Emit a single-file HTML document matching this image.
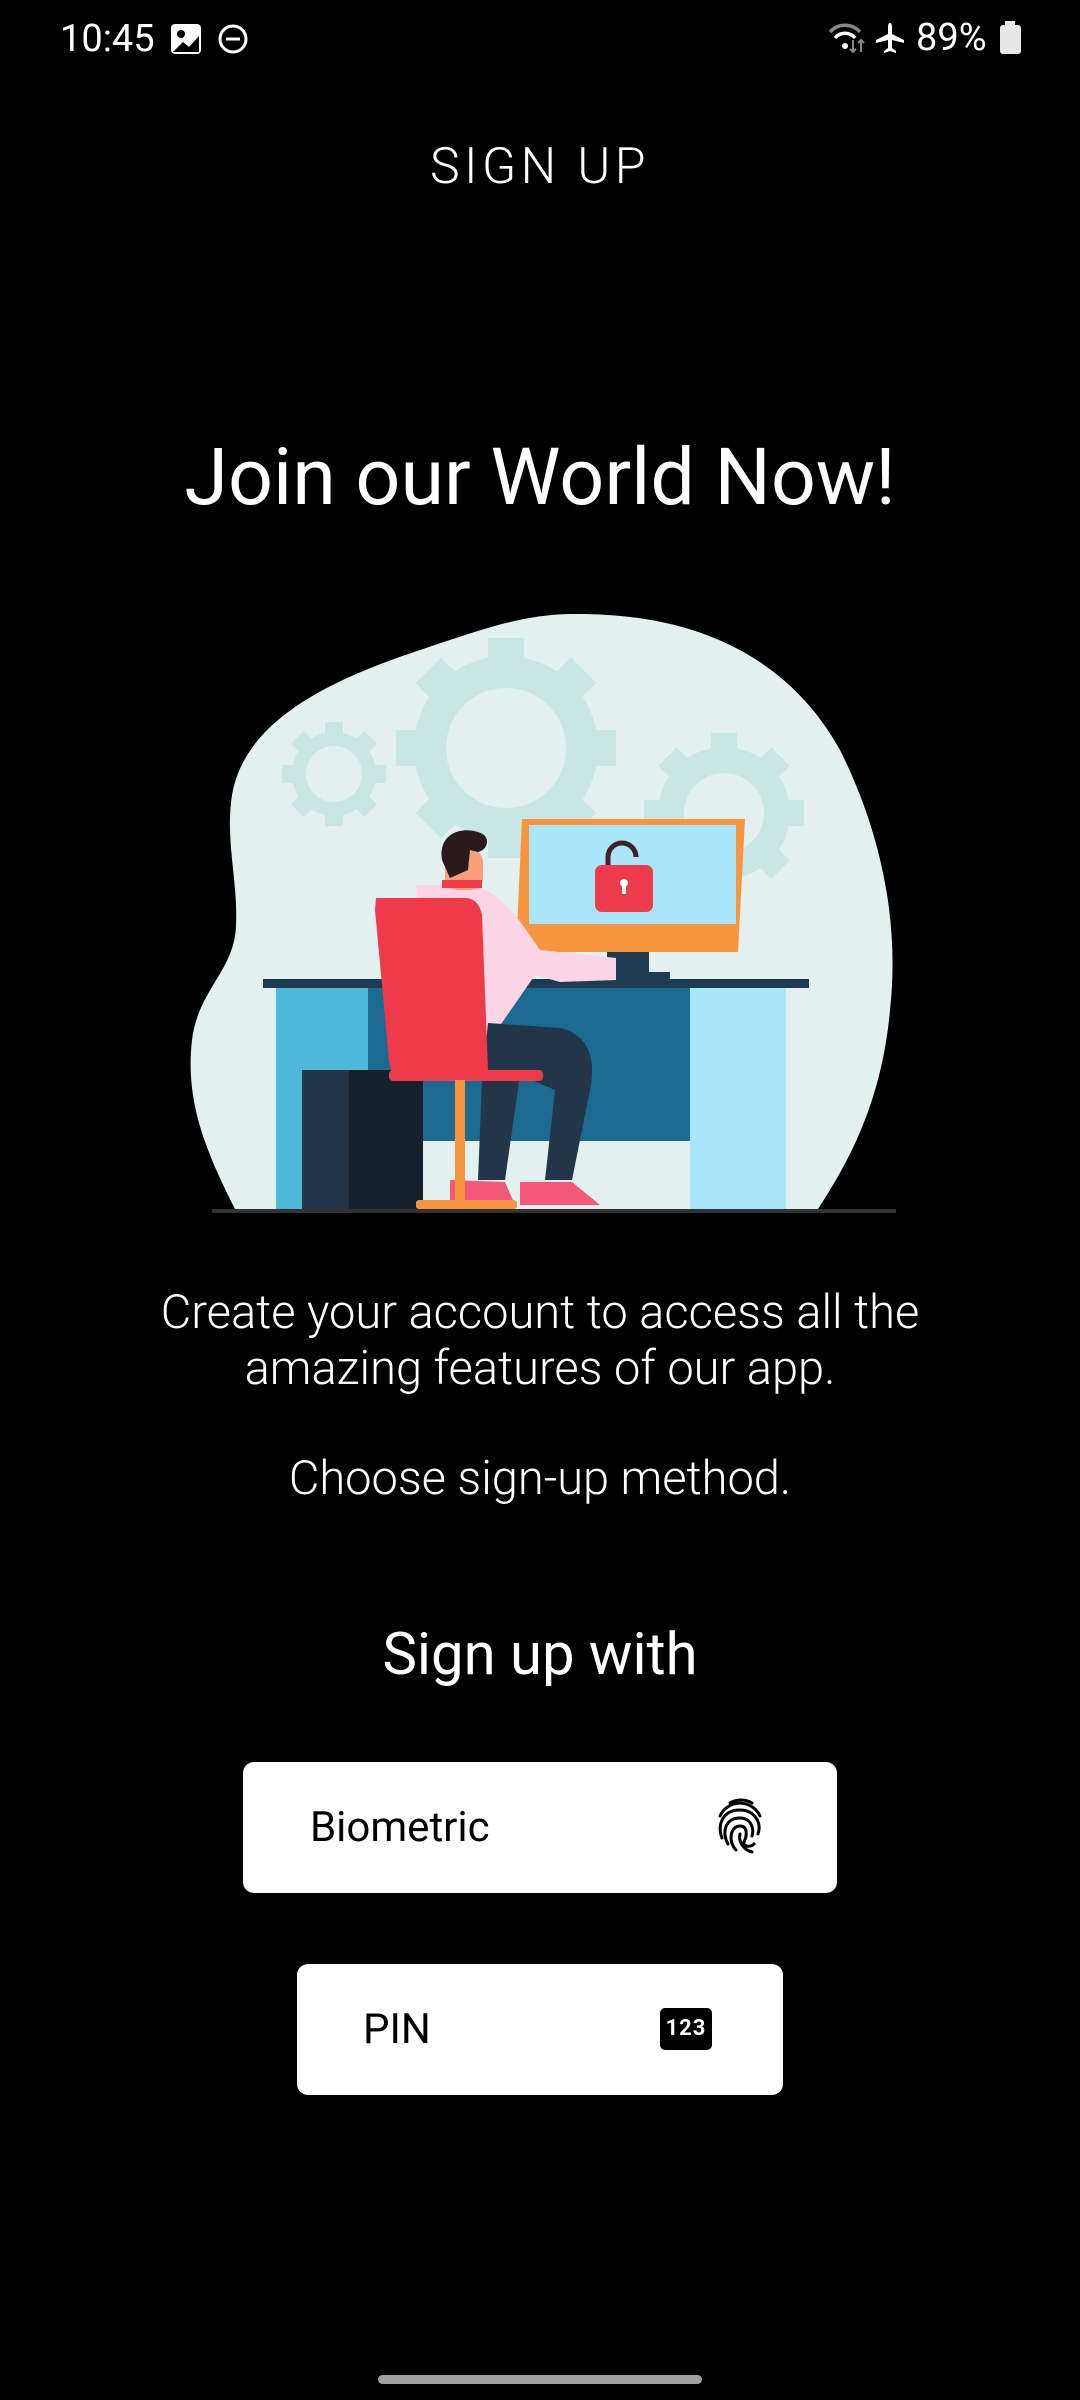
<!DOCTYPE html>
<html><head><meta charset="utf-8"><style>
html,body{margin:0;padding:0;background:#000;}
body{width:1080px;height:2400px;position:relative;overflow:hidden;font-family:"Roboto","Liberation Sans",sans-serif;color:#fff;}
.a{position:absolute;white-space:nowrap;}
.c{left:0;width:1080px;text-align:center;}
.btn{position:absolute;background:#fff;border-radius:11px;}
</style></head><body>
<div class="a" style="left:60px;top:17px;font-size:38px;">10:45</div>
<svg class="a" style="left:170px;top:22px" width="80" height="34" viewBox="0 0 80 34">
<rect x="1" y="2" width="30" height="30" rx="4" fill="#fff"/>
<circle cx="11" cy="12" r="4" fill="#000"/>
<path d="M3 30 L13 20 L19 25 L29 14 L29 30Z" fill="#000"/>
<circle cx="63" cy="17" r="13" fill="none" stroke="#fff" stroke-width="3"/>
<rect x="56" y="15.5" width="14" height="3" fill="#fff"/>
</svg>
<svg class="a" style="left:826px;top:20px" width="90" height="36" viewBox="0 0 90 36">
<path d="M4 12 A20 20 0 0 1 34 12" stroke="#888" stroke-width="3.5" fill="none"/>
<path d="M9 18 A13 13 0 0 1 29 18" stroke="#fff" stroke-width="3.5" fill="none"/>
<circle cx="19" cy="26" r="3" fill="#fff"/>
<path d="M27 20 V32 M24 29 L27 32 L30 29 M35 32 V20 M32 23 L35 20 L38 23" stroke="#888" stroke-width="2" fill="none"/>
<path d="M64 3 C66 3 66 6 66 8 L66 14 L78 20 L78 23 L66 20 L66 28 L70 31 L70 33 L64 31 L58 33 L58 31 L62 28 L62 20 L50 23 L50 20 L62 14 L62 8 C62 6 62 3 64 3Z" fill="#fff"/>
</svg>
<div class="a" style="left:916px;top:16px;font-size:38px;">89%</div>
<svg class="a" style="left:999px;top:21px" width="24" height="34"><rect x="6" y="0" width="10" height="4" fill="#e8e8e8"/><rect x="1" y="4" width="21" height="29" rx="3" fill="#e8e8e8"/></svg>

<div class="a c" style="top:138px;font-size:50px;font-weight:300;letter-spacing:4.5px;">SIGN UP</div>
<div class="a c" style="top:432px;font-size:79px;">Join our World Now!</div>

<svg class="a" style="left:0;top:0" width="1080" height="1240" viewBox="0 0 1080 1240">
<path d="M570 614 C700 612 790 660 840 750 C880 830 900 920 890 1010 C882 1100 850 1160 818 1209 L235 1209 C205 1150 185 1100 192 1040 C198 990 235 970 236 925 C238 880 225 840 232 795 C245 720 330 680 420 650 C480 630 520 615 570 614Z" fill="#e2f1ef"/>
<g fill="#c8e6e3">
<circle cx="506" cy="748" r="92"/>
<g transform="translate(506 748)"><rect x="-18" y="-110" width="36" height="220"/><rect x="-18" y="-110" width="36" height="220" transform="rotate(45)"/><rect x="-18" y="-110" width="36" height="220" transform="rotate(90)"/><rect x="-18" y="-110" width="36" height="220" transform="rotate(135)"/></g>
<circle cx="334" cy="774" r="42"/>
<g transform="translate(334 774)"><rect x="-9" y="-52" width="18" height="104"/><rect x="-9" y="-52" width="18" height="104" transform="rotate(45)"/><rect x="-9" y="-52" width="18" height="104" transform="rotate(90)"/><rect x="-9" y="-52" width="18" height="104" transform="rotate(135)"/></g>
<circle cx="724" cy="813" r="66"/>
<g transform="translate(724 813)"><rect x="-13" y="-80" width="26" height="160"/><rect x="-13" y="-80" width="26" height="160" transform="rotate(45)"/><rect x="-13" y="-80" width="26" height="160" transform="rotate(90)"/><rect x="-13" y="-80" width="26" height="160" transform="rotate(135)"/></g>
</g>
<circle cx="506" cy="748" r="60" fill="#e2f1ef"/>
<circle cx="334" cy="774" r="28" fill="#e2f1ef"/>
<circle cx="724" cy="813" r="40" fill="#e2f1ef"/>
<rect x="607" y="950" width="42" height="27" fill="#1d3c54"/>
<rect x="600" y="972" width="70" height="8" fill="#1d3c54"/>
<path d="M522 819 L745 819 L738 952 L516 952Z" fill="#f8963f"/>
<rect x="529" y="825" width="207" height="99" fill="#a9e6f9"/>
<path d="M608 868 V857 A14 14 0 0 1 636 857" stroke="#40212a" stroke-width="5" fill="none"/>
<rect x="595" y="865" width="58" height="47" rx="7" fill="#ee3a4b"/>
<circle cx="624" cy="883" r="4" fill="#fff"/><rect x="622" y="884" width="4" height="10" fill="#fff"/>
<rect x="263" y="979" width="546" height="9" fill="#1d3c54"/>
<rect x="276" y="988" width="92" height="221" fill="#4db8da"/>
<rect x="368" y="988" width="322" height="153" fill="#1c6a90"/>
<rect x="690" y="988" width="96" height="221" fill="#a9e6f9"/>
<rect x="302" y="1070" width="121" height="139" fill="#15222e"/>
<rect x="302" y="1070" width="47" height="139" fill="#22364a"/>
<path d="M416 885 L470 885 C500 890 520 920 540 950 L616 958 L616 980 L560 982 L535 975 L490 1040 L430 1040Z" fill="#fcd5e4"/>
<rect x="445" y="850" width="38" height="40" rx="12" fill="#f8a07a"/>
<path d="M442 860 C438 836 458 826 478 832 C492 836 488 850 478 852 L470 850 L468 870 L450 878Z" fill="#2a1a1e"/>
<rect x="442" y="880" width="40" height="8" fill="#ee3a4b"/>
<path d="M488 1023 L560 1028 C590 1035 596 1060 590 1090 L572 1180 L545 1180 L555 1090 L520 1075 L505 1180 L478 1180 L482 1080Z" fill="#22364a"/>
<path d="M450 1180 L505 1182 L515 1205 L450 1205Z M520 1182 L572 1182 L600 1205 L520 1205Z" fill="#f3587a"/>
<path d="M376 898 L464 898 C476 898 480 906 482 915 L488 1070 L400 1078 C394 1078 390 1070 389 1060 L375 910Z" fill="#ef3a4b"/>
<rect x="389" y="1070" width="154" height="11" rx="4" fill="#ef3a4b"/>
<rect x="455" y="1080" width="10" height="122" fill="#f8963f"/>
<rect x="416" y="1200" width="101" height="9" rx="3" fill="#f8963f"/>
<rect x="212" y="1209" width="684" height="4" fill="#333"/>
</svg>

<div class="a c" style="top:1285px;font-size:47px;font-weight:300;line-height:56px;">Create your account to access all the<br>amazing features of our app.</div>
<div class="a c" style="top:1451px;font-size:47px;font-weight:300;">Choose sign-up method.</div>
<div class="a c" style="top:1621px;font-size:58px;">Sign up with</div>

<div class="btn" style="left:243px;top:1762px;width:594px;height:131px;"></div>
<div class="a" style="left:310px;top:1803px;font-size:42px;color:#000;">Biometric</div>
<svg class="a" style="left:714px;top:1798px" width="52" height="56" viewBox="0 0 52 56" fill="none" stroke="#000" stroke-width="3" stroke-linecap="round">
<path d="M16 5 A22 22 0 0 1 38 5"/>
<path d="M6 18 A22 22 0 0 1 46 18"/>
<path d="M8 40 C3 28 8 12 26 12 C40 12 48 24 44 36"/>
<path d="M14 46 C8 36 10 20 26 20 C38 20 40 32 38 38"/>
<path d="M22 52 C14 44 16 28 26 28 C34 28 33 38 30 44 C28 48 36 50 40 46"/>
<path d="M26 36 C24 44 30 52 38 54"/>
</svg>

<div class="btn" style="left:297px;top:1964px;width:486px;height:131px;"></div>
<div class="a" style="left:363px;top:2005px;font-size:42px;color:#000;">PIN</div>
<div class="a" style="left:660px;top:2008px;width:52px;height:42px;background:#000;border-radius:5px;color:#fff;font-size:22px;font-weight:bold;text-align:center;line-height:42px;letter-spacing:1px;">123</div>

<div class="a" style="left:378px;top:2375px;width:324px;height:9px;border-radius:5px;background:#a0a0a0;"></div>
</body></html>
